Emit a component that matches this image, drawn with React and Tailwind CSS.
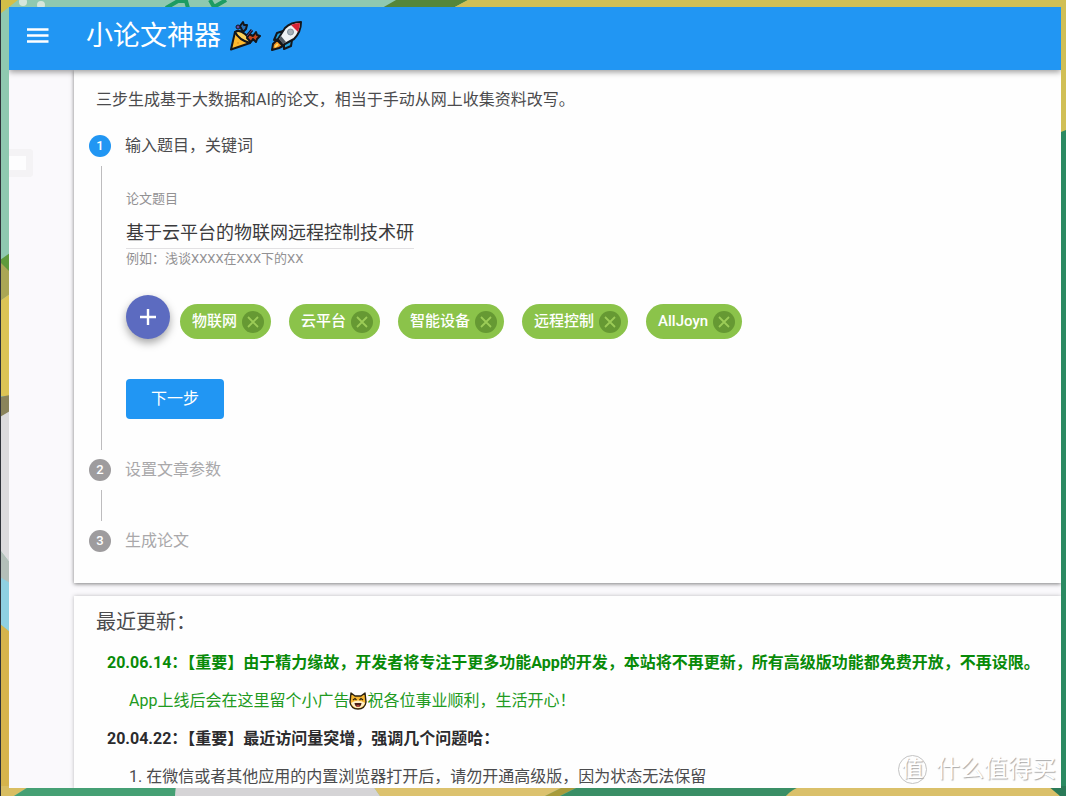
import React, { useState } from "react";

const initialKeywords = ["物联网", "云平台", "智能设备", "远程控制", "AllJoyn"];

function Wallpaper() {
  return (
    <svg
      className="absolute inset-0 h-full w-full"
      viewBox="0 0 1066 796"
      preserveAspectRatio="none"
      aria-hidden="true"
    >
      <rect width="1066" height="796" fill="#8fc9b0" />
      <path d="M0 0H18L0 14Z" fill="#d3bf48" />
      <circle cx="23" cy="2" r="4" fill="#d5e6dc" />
      <circle cx="41" cy="5" r="4" fill="#d5e6dc" />
      <path d="M166 8 178 1H186L188 8M210 0 214 7 226 0" fill="none" stroke="#1d9c62" strokeWidth="4" />
      <path d="M382 8 396 0H468L453 8Z" fill="#55863a" />
      <path d="M468 0H1066V132H1056V8H453Z" fill="#d1bf55" />
      <path d="M1056 134 1066 130V796H1056Z" fill="#2b8a62" />
      <path d="M0 260 10 253V275H0Z" fill="#5f9a3c" />
      <path d="M0 262 10 272V294L0 301Z" fill="#aaa655" />
      <path d="M0 301 10 294V396H0Z" fill="#dcc455" />
      <path d="M0 397 10 395V412L0 417Z" fill="#8a845b" />
      <path d="M0 417 10 411V563L0 550Z" fill="#dcdbdd" />
      <path d="M0 550 10 563V585L0 577Z" fill="#b3bfb9" />
      <path d="M0 577 10 583V632L0 624Z" fill="#8fd0e2" />
      <path d="M0 624 10 632V796H0Z" fill="#d6b44c" />
      <path d="M0 786H30L14 796H0Z" fill="#d9be62" />
      <path d="M30 786H176L175 796H14Z" fill="#45a074" />
      <path d="M176 786H373L380 796H175Z" fill="#d5d4d6" />
      <path d="M373 786H565L545 796H380Z" fill="#dcc26e" />
      <path d="M565 786H580L560 796H545Z" fill="#a89b3a" />
      <path d="M580 786H810L786 796H560Z" fill="#3a8f66" />
      <path d="M786 796Q792 789 802 786H1048Q1058 788 1060 796Z" fill="#dac06a" />
      <path d="M1048 786H1066V796H1060Z" fill="#2b7a58" />
      <rect width="1" height="796" fill="#30333a" />
    </svg>
  );
}

function PartyIcon() {
  return (
    <svg className="h-8 w-8" viewBox="0 0 32 32" aria-hidden="true">
      <g stroke="#14161a" strokeWidth="2" strokeLinejoin="round">
        <path d="M5 12 1 29.500 20 23Q11 20 5 12Z" fill="#fdb92e" />
        <path d="M5 12Q9 20 20 23Q20 18 15 14Q9 9 5 12Z" fill="#fcd058" />
        <path d="M17 18 19 14 23 16 26 12 27 15 30 16 27 19 26 22 23 19 21 22Z" fill="#c9461d" />
        <path d="M10 6 13 2 14 5 17 5 16 9 13 12Z" fill="#2870b7" />
      </g>
      <path d="M17 16 22 10" stroke="#14161a" strokeWidth="3" />
      <path d="M17 16 22 10" stroke="#6c3e91" strokeWidth="1" />
      <circle cx="8" cy="7" r="2" fill="#6744a0" stroke="#14161a" />
      <circle cx="8" cy="23" r="1" fill="#e79a22" />
    </svg>
  );
}

function RocketIcon() {
  return (
    <svg className="h-8 w-8" viewBox="0 0 32 32" aria-hidden="true">
      <g stroke="#14161a" strokeWidth="2" strokeLinejoin="round">
        <path d="M12 11 6 13 3 20 9 19Z" fill="#28a3dc" />
        <path d="M21 20 20 26 13 29 13 23Z" fill="#28a3dc" />
        <path d="M6 20 2 24 1 30 8 28 12 26Z" fill="#f39321" />
        <path d="M30 2Q20 2 14 8L7 19 12 25 23 19Q30 12 30 2Z" fill="#f0f2f4" />
      </g>
      <path d="M29 3Q24 3 20 5L27 12Q29 7 29 3Z" fill="#d82335" />
      <path d="M8 19 12 24 15 22 10 16Z" fill="#515960" />
      <circle cx="19.500" cy="12" r="3" fill="#a8b0b7" stroke="#82919c" />
      <path d="M4 27 7 24" stroke="#ffda64" strokeWidth="2" />
    </svg>
  );
}

function CatIcon() {
  return (
    <svg className="inline h-[18px] w-[18px] align-[-4px]" viewBox="0 0 18 18" aria-hidden="true">
      <path
        d="M2 1 6 4H12L16 1 17 10Q16 17 9 17 2 17 1 10Z"
        fill="#f6b632"
        stroke="#2d220f"
        strokeWidth="1.400"
        strokeLinejoin="round"
      />
      <path d="M2 11Q9 6 16 11 14 16 9 16 4 16 2 11Z" fill="#fff0c7" />
      <path d="M4 8 6 6.500 7.500 8M10.500 8 12 6.500 14 8" fill="none" stroke="#2d220f" strokeWidth="1.200" />
      <path d="M5.500 11H12.500Q12 15 9 15T5.500 11Z" fill="#4b1e15" />
      <path d="M7 14Q9 12.500 11 14 9 15.500 7 14Z" fill="#e6574e" />
    </svg>
  );
}

function StepHeading({ number, active, children }) {
  return (
    <div className="flex h-[22px] items-center gap-[14px]">
      <span
        className={
          active
            ? "flex size-[22px] items-center justify-center rounded-full bg-[#2196f3] text-[13px] font-medium text-white"
            : "flex size-[22px] items-center justify-center rounded-full bg-[#9e9c9e] text-[13px] font-medium text-white"
        }
      >
        {number}
      </span>
      <h2 className={active ? "text-[16px] text-[#4b4b4d]" : "text-[16px] text-[#a9a8aa]"}>{children}</h2>
    </div>
  );
}

function Chip({ label, onRemove }) {
  return (
    <li className="flex h-[35px] items-center gap-[5px] rounded-full bg-[#8bc34a] pr-[7px] pl-3 text-[15px] font-medium text-white">
      {label}
      <button
        type="button"
        aria-label={`删除 ${label}`}
        onClick={onRemove}
        className="flex size-[22px] items-center justify-center rounded-full bg-[#669933]"
      >
        <svg className="size-[22px]" viewBox="0 0 22 22" aria-hidden="true">
          <path d="M6 6 16 16M16 6 6 16" stroke="#9ccc57" strokeWidth="1.800" />
        </svg>
      </button>
    </li>
  );
}

export default function App() {
  const [title, setTitle] = useState("基于云平台的物联网远程控制技术研");
  const [keywords, setKeywords] = useState(initialKeywords);

  return (
    <div className="relative h-screen overflow-hidden pt-[7px] pr-[5px] pb-2 pl-[9px] font-[Roboto,'Noto_Sans_CJK_SC',sans-serif]">
      <Wallpaper />
      <div className="relative flex h-full flex-col overflow-hidden bg-[#faf9fc]">
        <header className="relative z-10 flex h-[63px] shrink-0 items-center bg-[#2196f3] pb-[6px] pl-4 text-white shadow-[0_2px_6px_rgba(0,0,0,0.4)]">
          <button type="button" aria-label="菜单" className="flex h-9 w-[61px] items-center">
            <svg className="h-6 w-[26px]" viewBox="0 0 26 24" aria-hidden="true">
              <path d="M2 5.500H23.500M2 11.500H23.500M2 17.500H23.500" stroke="#fff" strokeWidth="2.300" />
            </svg>
          </button>
          <h1 className="flex items-center gap-[9px] text-[27px] leading-9">
            小论文神器
            <PartyIcon />
            <RocketIcon />
          </h1>
        </header>

        <div className="flex min-h-0 flex-1">
          <aside className="w-[65px] shrink-0 pt-[79px]">
            <div className="h-7 w-6 rounded-r-sm border-y-[7px] border-r-[7px] border-[#f4f3f5] bg-[#fdfdfe]" />
          </aside>
          <main className="flex min-w-0 flex-1 flex-col gap-[13px]">
            <section className="shrink-0 bg-[#fefefe] pt-[18px] pb-[31px] pl-[15px] shadow-[0_1px_4px_rgba(0,0,0,0.5)]">
              <p className="pl-[7px] text-[16px] leading-6 text-[#4b4b4d]">
                三步生成基于大数据和AI的论文，相当于手动从网上收集资料改写。
              </p>
              <ol className="mt-[23px]">
                <li>
                  <StepHeading number="1" active>输入题目，关键词</StepHeading>
                  <div className="my-[9px] ml-3 border-l border-[#bdbcbe] pt-[23px] pb-[31px] pl-6">
                    <label htmlFor="paper-title" className="block text-[13px] leading-5 text-[#929193]">
                      论文题目
                    </label>
                    <input
                      id="paper-title"
                      value={title}
                      onChange={(event) => setTitle(event.target.value)}
                      className="mt-1 block h-9 w-72 border-b border-[#e2e1e3] text-[18px] text-[#3a3a3c] outline-none"
                    />
                    <p className="text-[13px] leading-5 text-[#929193]">例如：浅谈XXXX在XXX下的XX</p>
                    <div className="mt-[26px] flex items-end gap-[10px]">
                      <button
                        type="button"
                        aria-label="添加关键词"
                        className="flex size-11 shrink-0 items-center justify-center rounded-full bg-[#5c6bc0] shadow-[0_4px_8px_rgba(0,0,0,0.35)]"
                      >
                        <svg className="size-11" viewBox="0 0 44 44" aria-hidden="true">
                          <path d="M22 14V30M14 22H30" stroke="#fff" strokeWidth="2.400" />
                        </svg>
                      </button>
                      <ul className="flex flex-wrap gap-[18px]">
                        {keywords.map((keyword) => (
                          <Chip
                            key={keyword}
                            label={keyword}
                            onRemove={() => setKeywords(keywords.filter((item) => item !== keyword))}
                          />
                        ))}
                      </ul>
                    </div>
                    <button
                      type="button"
                      className="mt-10 block h-10 w-[98px] rounded-sm bg-[#2196f3] text-[16px] text-white"
                    >
                      下一步
                    </button>
                  </div>
                </li>
                <li>
                  <StepHeading number="2">设置文章参数</StepHeading>
                  <div className="my-[9px] ml-3 h-[31px] border-l border-[#bdbcbe]" />
                </li>
                <li>
                  <StepHeading number="3">生成论文</StepHeading>
                </li>
              </ol>
            </section>

            <section className="flex-1 bg-[#fefefe] pt-3 pl-[22px] shadow-[0_0_4px_rgba(0,0,0,0.25)]">
              <h2 className="text-[20px] leading-7 text-[#4b4b4d]">最近更新：</h2>
              <div className="mt-[15px] flex flex-col gap-[14px] pl-[11px] text-[16px] leading-6 whitespace-nowrap text-[#4b4b4d]">
                <h3 className="font-bold text-[#088a08]">
                  20.06.14：【重要】由于精力缘故，开发者将专注于更多功能App的开发，本站将不再更新，所有高级版功能都免费开放，不再设限。
                </h3>
                <p className="pl-[22px] text-[#219a21]">
                  App上线后会在这里留个小广告
                  <CatIcon />
                  祝各位事业顺利，生活开心！
                </p>
                <h3 className="font-bold text-[#2b2b2d]">20.04.22：【重要】最近访问量突增，强调几个问题哈：</h3>
                <p className="pl-[22px]">1. 在微信或者其他应用的内置浏览器打开后，请勿开通高级版，因为状态无法保留</p>
              </div>
            </section>
          </main>
        </div>

        <div className="absolute right-[5px] bottom-[3px] flex items-center gap-[9px] text-white [text-shadow:1px_1px_1px_#aaa]">
          <span className="flex size-[29px] items-center justify-center rounded-full border border-[#c4c4c4] text-[22px] leading-none">
            值
          </span>
          <span className="text-[24px] leading-8">什么值得买</span>
        </div>
      </div>
    </div>
  );
}
